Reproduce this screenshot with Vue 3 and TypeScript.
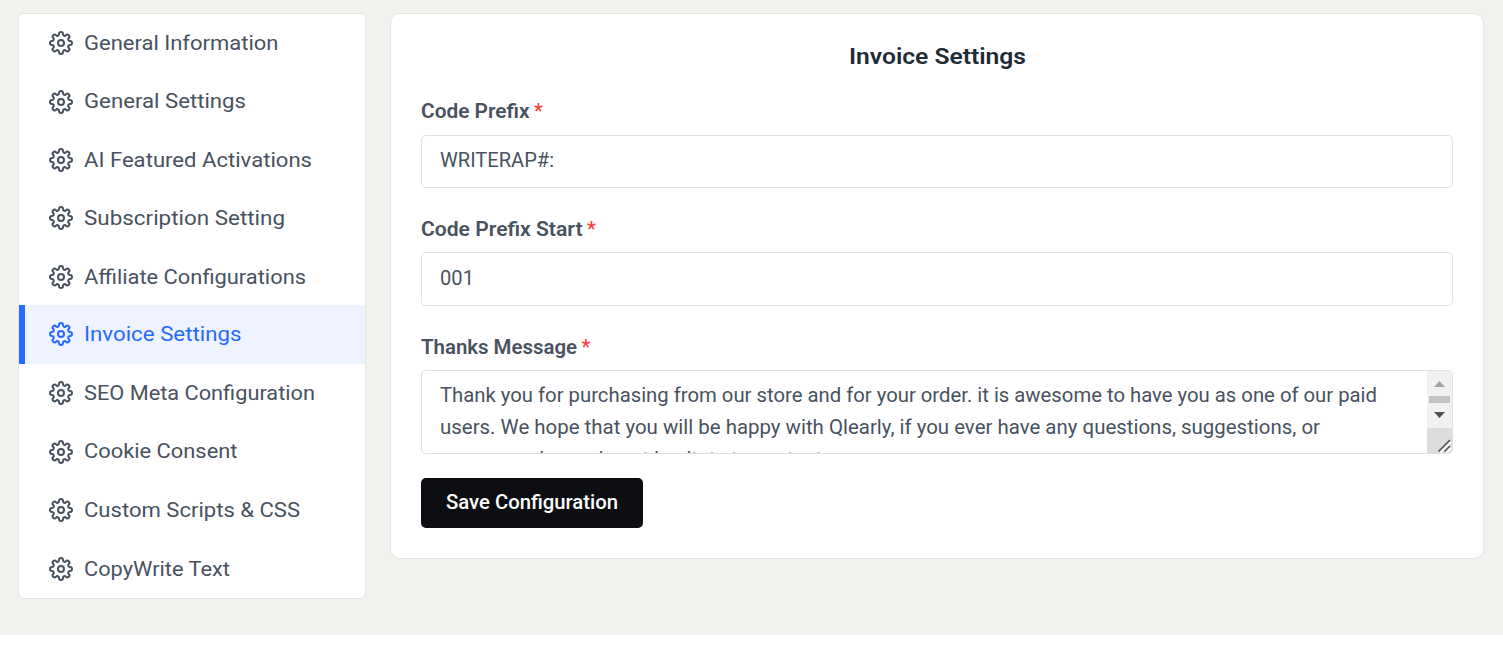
<script setup lang="ts">
import { ref } from 'vue'

interface MenuItem {
  label: string
  width: number
}

const menu: MenuItem[] = [
  { label: 'General Information', width: 194.5 },
  { label: 'General Settings', width: 162 },
  { label: 'AI Featured Activations', width: 228 },
  { label: 'Subscription Setting', width: 201 },
  { label: 'Affiliate Configurations', width: 222 },
  { label: 'Invoice Settings', width: 157.5 },
  { label: 'SEO Meta Configuration', width: 231 },
  { label: 'Cookie Consent', width: 153.5 },
  { label: 'Custom Scripts & CSS', width: 216 },
  { label: 'CopyWrite Text', width: 146 },
]
const active = ref('Invoice Settings')

const prefix = 'WRITERAP#:'
const start = '001'
const message = [
  { text: 'Thank you for purchasing from our store and for your order. it is awesome to have you as one of our paid', width: 937 },
  { text: 'users. We hope that you will be happy with Qlearly, if you ever have any questions, suggestions, or', width: 880 },
  { text: 'concerns please do not hesitate to contact us.', width: 414 },
]

// Widens the letters of a line so that it fills the given width.
const vFit = {
  mounted(el: HTMLElement, binding: { value: number }) {
    const natural = el.getBoundingClientRect().width
    const target = binding.value
    el.style.transform = `scaleX(${target / natural})`
    el.style.marginRight = `${target - natural}px`
  },
}
</script>

<template>
  <main class="page">
    <nav class="sidebar">
      <a
        v-for="item in menu"
        :key="item.label"
        class="item"
        :class="{ active: item.label === active }"
        @click="active = item.label"
      >
        <svg class="gear" viewBox="0 0 24 24">
          <circle cx="12" cy="12" r="3" />
          <path d="M19.73 16.9l.06.06a2 2 0 0 1-2.83 2.83l-.06-.06A1.65 1.65 0 0 0 14 20.91V21a2 2 0 0 1-4 0v-.09A1.65 1.65 0 0 0 7.1 19.73l-.06.06a2 2 0 0 1-2.83-2.83l.06-.06A1.65 1.65 0 0 0 3.09 14H3a2 2 0 0 1 0-4h.09A1.65 1.65 0 0 0 4.27 7.1l-.06-.06a2 2 0 0 1 2.83-2.83l.06.06A1.65 1.65 0 0 0 10 3.09V3a2 2 0 0 1 4 0v.09A1.65 1.65 0 0 0 16.9 4.27l.06-.06a2 2 0 0 1 2.83 2.83l-.06.06A1.65 1.65 0 0 0 20.91 10H21a2 2 0 0 1 0 4h-.09A1.65 1.65 0 0 0 19.73 16.9z" />
        </svg>
        <span v-fit="item.width" class="label">{{ item.label }}</span>
      </a>
    </nav>

    <section class="card">
      <h1 class="title"><span v-fit="177">Invoice Settings</span></h1>

      <div class="field">
        <div class="caption"><span v-fit="108.5">Code Prefix</span><b class="star">*</b></div>
        <div class="input"><span v-fit="114">{{ prefix }}</span></div>
      </div>
      <div class="field">
        <div class="caption"><span v-fit="161.5">Code Prefix Start</span><b class="star">*</b></div>
        <div class="input second"><span v-fit="34">{{ start }}</span></div>
      </div>
      <div class="field last">
        <div class="caption"><span v-fit="156">Thanks Message</span><b class="star">*</b></div>
        <div class="area">
          <div class="lines">
            <div v-for="line in message" :key="line.text" class="line">
              <span v-fit="line.width">{{ line.text }}</span>
            </div>
          </div>
          <div class="scroll">
            <svg class="bar" viewBox="0 0 25 57">
              <path d="M7 16h11l-5.5-6z" fill="#a3a3a3" />
              <path d="M2 25h21v7H2z" fill="#c1c1c1" />
              <path d="M7 41h11l-5.5 6z" fill="#505050" />
            </svg>
            <svg class="grip" viewBox="0 0 25 25">
              <path d="M13.500 24.500 24 14M19.500 24.500 24 20" stroke="#fff" stroke-width="2" />
              <path d="M11.500 23.500 23 12M17.500 23.500 23 18" stroke="#4f4a54" stroke-width="1.500" />
            </svg>
          </div>
        </div>
      </div>

      <button class="save"><span v-fit="172">Save Configuration</span></button>
    </section>
  </main>
</template>

<style>
body {
  background: #fff;
}
</style>

<style scoped>
.page {
  box-sizing: border-box;
  display: flex;
  align-items: flex-start;
  gap: 24px;
  height: 635px;
  padding: 13px 19px 0 18px;
  background: #f3f1ed;
  color: #48525f;
  font-family: Roboto, sans-serif;
}
.page span {
  display: inline-block;
  white-space: nowrap;
  transform-origin: left center;
}
.sidebar {
  box-sizing: border-box;
  flex: none;
  width: 348px;
  height: 586px;
  border: 1px solid #e6e6e6;
  border-radius: 6px;
  background: #fff;
}
.item {
  box-sizing: border-box;
  display: flex;
  align-items: center;
  gap: 11px;
  height: 58.4px;
  padding-left: 30px;
  font-size: 20.6px;
  cursor: pointer;
}
.item.active {
  height: 59px;
  margin-top: -1px;
  padding-left: 24px;
  border-left: 6px solid #256bff;
  background: #eff3ff;
  color: #256bff;
}
.item:last-child {
  margin-top: 0.5px;
}
.label {
  margin-top: -0.4px;
}
.gear {
  flex: none;
  width: 24px;
  height: 24px;
  fill: none;
  stroke: currentColor;
  stroke-width: 2;
  stroke-linecap: round;
  stroke-linejoin: round;
}
.card {
  box-sizing: border-box;
  flex: 1;
  height: 546px;
  padding: 28px 30px 0;
  border: 1px solid #e4e5e7;
  border-radius: 10px;
  background: #fff;
}
.title {
  margin: 0;
  text-align: center;
  font-size: 22px;
  line-height: 30px;
  font-weight: 600;
  color: #212b36;
}
.field {
  margin-bottom: 30px;
  font-size: 19.5px;
}
.field.last {
  margin-bottom: 24px;
}
.caption {
  display: flex;
  height: 24px;
  margin-bottom: 11px;
  line-height: 24px;
  font-weight: 600;
}
.title + .field {
  margin-top: 28px;
}
.field + .field .caption {
  margin-bottom: 10px;
}
.star {
  margin-left: 4.5px;
  font-weight: 600;
  line-height: 23px;
  color: #fb4141;
}
.input {
  box-sizing: border-box;
  height: 53px;
  padding-left: 18px;
  border: 1px solid #dfe1e4;
  border-radius: 5px;
  line-height: 50px;
}
.input.second {
  height: 54px;
  line-height: 52px;
}
.area {
  box-sizing: border-box;
  display: flex;
  justify-content: space-between;
  height: 84px;
  padding-left: 18px;
  border: 1px solid #dfe1e4;
  border-radius: 5px;
  overflow: hidden;
}
.lines {
  padding-top: 9px;
}
.line {
  height: 32px;
  line-height: 32px;
}
.scroll {
  display: flex;
  flex: none;
  flex-direction: column;
  width: 25px;
  background: #f1f1f1;
}
.bar {
  display: block;
  width: 25px;
  height: 57px;
}
.grip {
  display: block;
  width: 25px;
  height: 25px;
  fill: none;
  background: #dcdcdc;
}
.save {
  display: block;
  width: 222px;
  height: 50px;
  padding: 0 0 1px;
  border: 0;
  border-radius: 5px;
  background: #0c0e12;
  color: #fff;
  font: 500 19.5px Roboto, sans-serif;
}
</style>
